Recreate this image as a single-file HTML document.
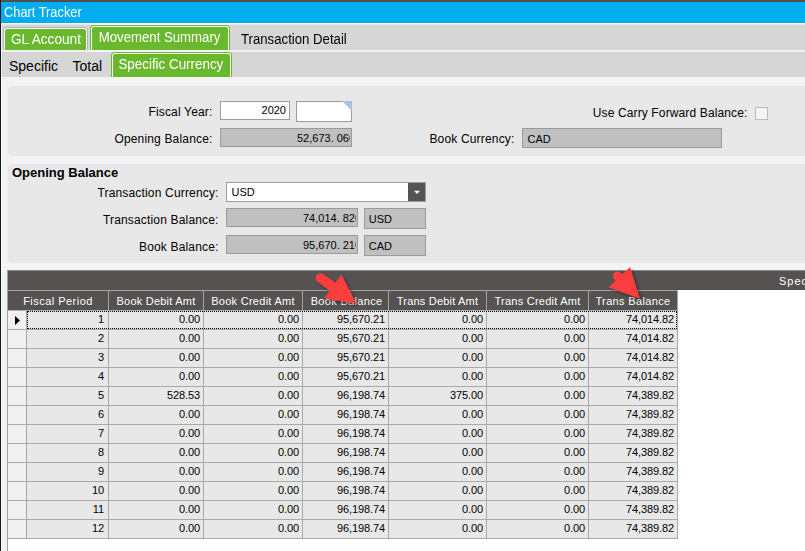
<!DOCTYPE html>
<html>
<head>
<meta charset="utf-8">
<title>Chart Tracker</title>
<style>
*{box-sizing:border-box;margin:0;padding:0}
html,body{width:805px;height:551px;overflow:hidden;background:#f3f3f5;font-family:"Liberation Sans",sans-serif;color:#000}
#root{position:absolute;left:0;top:0;width:805px;height:551px;overflow:hidden;background:#f3f3f5}
.abs{position:absolute}
.topline{left:0;top:0;width:805px;height:2px;background:#54504f}
.leftline{left:0;top:0;width:1px;height:551px;background:#101820;z-index:50}
.title{left:1px;top:2px;width:804px;height:21px;background:#00aeef;color:#fff;font-size:14px;line-height:20px;padding-left:2.5px;white-space:nowrap}
.title span{display:inline-block;transform-origin:0 50%;transform:scaleX(.917)}
.tabbar{left:1px;width:804px;background:#d6d6d6}
.wline{left:1px;width:804px;height:2px;background:linear-gradient(#fbf8f7 0,#fbf8f7 50%,#e9e9e9 50%,#e9e9e9 100%)}
.wline2{left:1px;width:804px;height:2px;background:linear-gradient(#f4f4f4 0,#f4f4f4 50%,#ededed 50%,#ededed 100%)}
.wspot{height:2px;background:#fbf8f9}
.tab{position:absolute;font-size:14px;white-space:nowrap;color:#000;line-height:16px}
.gtab{position:absolute;background:#69b82d;color:#fff;font-size:14px;white-space:nowrap;border-radius:3px 3px 0 0;border:1px solid #fff;border-bottom:none;text-align:center}
.gtab{clip-path:inset(-1px -1px 0 -1px)}
.gtab.inactive{box-shadow:0 0 0 1px #b4b4b4}
.gtab.active{box-shadow:0 0 0 1px #69b82d}
.panel{position:absolute;background:#e8e8e8;border-radius:4px 0 0 4px}
.lbl{position:absolute;font-size:12px;letter-spacing:0.17px;white-space:nowrap;text-align:right;line-height:16px}
.ro{position:absolute;background:#c0c0c0;border:1px solid #9b9b9b;font-size:11px;line-height:16px;white-space:nowrap;overflow:hidden;padding:0 5px}
.in{position:absolute;background:#fff;border:1px solid #9b9b9b;font-size:11px;line-height:16px;white-space:nowrap;overflow:hidden;padding:0 4px}
.num{position:absolute;top:1px;line-height:17px}
.gridwrap{position:absolute;left:8px;top:291px;width:670px;font-size:11px}
.ghead{display:flex;height:20px;background:#555251;color:#fff;border-bottom:1px solid #b0b0b0}
.hc{height:19px;border-right:1px solid #a6a4a3;text-align:center;line-height:21px;white-space:nowrap;letter-spacing:0.35px;flex:none}
.hc.sel{width:19px;border-right:none}
.hc.fp span{position:relative;left:-9.5px}
.grow{display:flex;height:19px}
.gc{height:19px;background:#e8e8e8;border-right:1px solid #a9a9a9;border-bottom:1px solid #a9a9a9;text-align:right;padding-right:3px;line-height:17px;white-space:nowrap;flex:none;overflow:hidden;letter-spacing:-0.1px}
.gc.sel{width:19px;background:#f0f0f0}
.focus{left:27px;top:311px;width:650px;height:18px;border:1px dotted #000}

.sx{display:inline-block;transform-origin:50% 50%}
.tab .sx{transform-origin:0 50%}

</style>
</head>
<body>
<div id="root">
  <div class="abs topline"></div>
  <div class="abs leftline"></div>
  <div class="abs title"><span>Chart Tracker</span></div>

  <!-- first tab bar -->
  <div class="abs wline" style="top:23px"></div>
  <div class="abs wspot" style="left:90px;top:23px;width:140px"></div>
  <div class="abs tabbar" style="top:25px;height:25px"></div>
  <div class="gtab inactive" style="left:4px;top:28px;width:83px;height:22px;line-height:21px"><span class="sx" style="transform:scaleX(.975)">GL Account</span></div>
  <div class="gtab active" style="left:91px;top:26px;width:138px;height:24px;line-height:21px"><span class="sx" style="transform:scaleX(.9415)">Movement Summary</span></div>
  <div class="tab" style="left:241px;top:31px"><span class="sx" style="transform:scaleX(.9417)">Transaction Detail</span></div>

  <!-- second tab bar -->
  <div class="abs wline2" style="top:50px"></div>
  <div class="abs wspot" style="left:90px;top:50px;width:140px"></div>
  <div class="abs tabbar" style="top:52px;height:25px"></div>
  <div class="tab" style="left:9px;top:58px">Specific</div>
  <div class="tab" style="left:72.5px;top:58px">Total</div>
  <div class="gtab active" style="left:112px;top:53px;width:119px;height:24px;line-height:21px;padding-right:0.8px"><span class="sx" style="transform:scaleX(.956)">Specific Currency</span></div>

  <div class="abs" style="left:1px;top:23px;width:1px;height:528px;background:rgba(255,255,255,.55);z-index:40"></div>
  <!-- panel 1 -->
  <div class="panel" style="left:8px;top:86px;width:797px;height:70px"></div>
  <div class="lbl" style="left:100px;width:112.5px;top:104px">Fiscal Year:</div>
  <div class="in" style="left:220px;top:101px;width:70px;height:19px;text-align:right;padding-right:3px;line-height:17px">2020</div>
  <div class="in" style="left:296px;top:101px;width:56px;height:21px;padding:0;overflow:visible">
    <svg class="abs" style="right:-1px;top:-1px" width="10" height="10" viewBox="0 0 10 10"><path d="M0 0 L10 0 L10 10 Z" fill="#abc1e2"/></svg>
  </div>
  <div class="lbl" style="left:100px;width:112.5px;top:131px">Opening Balance:</div>
  <div class="ro" style="left:220px;top:128px;width:132px;height:19px;padding:0 1px 0 0"><div style="position:relative;width:100%;height:100%;overflow:hidden"><span class="num" style="left:76px">52,673. 060</span></div></div>
  <div class="lbl" style="left:560px;width:187.5px;top:105px;letter-spacing:0.13px">Use Carry Forward Balance:</div>
  <div class="abs" style="left:755px;top:107px;width:13px;height:13px;border:1px solid #bcbcbc;background:#f4f4f4"></div>
  <div class="lbl" style="left:400px;width:114.5px;top:131px">Book Currency:</div>
  <div class="ro" style="left:522px;top:128px;width:200px;height:20px;line-height:20px;padding-left:4.5px">CAD</div>

  <!-- panel 2 -->
  <div class="panel" style="left:8px;top:164px;width:797px;height:99px"></div>
  <div class="abs" style="left:12px;top:164px;font-size:13px;font-weight:bold;line-height:18px;white-space:nowrap">Opening Balance</div>
  <div class="lbl" style="left:60px;width:158.6px;top:185px">Transaction Currency:</div>
  <div class="in" style="left:226px;top:182px;width:200px;height:20px;line-height:19px;padding-left:4.5px">USD
    <div class="abs" style="right:0;top:0;width:17px;height:18px;background:#555250"></div>
    <svg class="abs" style="right:4.5px;top:7px" width="8" height="5" viewBox="0 0 8 5"><path d="M1 0.8 L7 0.8 L4 4 Z" fill="#fff"/></svg>
  </div>
  <div class="lbl" style="left:60px;width:158.6px;top:212px">Transaction Balance:</div>
  <div class="ro" style="left:226px;top:208px;width:132px;height:19px;padding:0 1px 0 0"><div style="position:relative;width:100%;height:100%;overflow:hidden"><span class="num" style="left:76px">74,014. 820</span></div></div>
  <div class="ro" style="left:364px;top:208px;width:62px;height:21px;line-height:20px;padding-left:3.7px">USD</div>
  <div class="lbl" style="left:60px;width:158.6px;top:239px">Book Balance:</div>
  <div class="ro" style="left:226px;top:235px;width:132px;height:19px;padding:0 1px 0 0"><div style="position:relative;width:100%;height:100%;overflow:hidden"><span class="num" style="left:76px">95,670. 210</span></div></div>
  <div class="ro" style="left:364px;top:235px;width:62px;height:21px;line-height:20px;padding-left:3.7px">CAD</div>

  <!-- grid frame -->
  <div class="abs" style="left:7px;top:270px;width:798px;height:281px;background:#fff;border-left:1px solid #a0a0a0;border-top:1px solid #8c8a89"></div>
  <div class="abs" style="left:8px;top:271px;width:797px;height:19px;background:#555251"></div>
  <div class="abs" style="left:779px;top:274px;font-size:11px;letter-spacing:1px;color:#fff;white-space:nowrap;line-height:14px">Specific Currency</div>
  <div class="abs" style="left:8px;top:290px;width:670px;height:1px;background:#a6a4a3"></div>

<div class="gridwrap">
<div class="ghead">
<div class="hc sel"></div>
<div class="hc fp" style="width:82px;letter-spacing:0.47px;padding-left:0px"><span>Fiscal Period</span></div>
<div class="hc" style="width:95px;letter-spacing:0.23px;padding-left:0px"><span>Book Debit Amt</span></div>
<div class="hc" style="width:99px;letter-spacing:0.27px;padding-left:0px"><span>Book Credit Amt</span></div>
<div class="hc" style="width:86px;letter-spacing:0.33px;padding-left:2.2px"><span>Book Balance</span></div>
<div class="hc" style="width:98px;letter-spacing:0.2px;padding-left:0px"><span>Trans Debit Amt</span></div>
<div class="hc" style="width:102px;letter-spacing:0.24px;padding-left:0px"><span>Trans Credit Amt</span></div>
<div class="hc" style="width:89px;letter-spacing:0.35px;padding-left:0px"><span>Trans Balance</span></div>
</div>
<div class="grow">
<div class="gc sel"></div>
<div class="gc" style="width:82px;padding-right:4px">1</div>
<div class="gc" style="width:95px;padding-right:3px">0.00</div>
<div class="gc" style="width:99px;padding-right:3px">0.00</div>
<div class="gc" style="width:86px;padding-right:3px">95,670.21</div>
<div class="gc" style="width:98px;padding-right:3px">0.00</div>
<div class="gc" style="width:102px;padding-right:3px">0.00</div>
<div class="gc" style="width:89px;padding-right:3px">74,014.82</div>
</div>
<div class="grow">
<div class="gc sel"></div>
<div class="gc" style="width:82px;padding-right:4px">2</div>
<div class="gc" style="width:95px;padding-right:3px">0.00</div>
<div class="gc" style="width:99px;padding-right:3px">0.00</div>
<div class="gc" style="width:86px;padding-right:3px">95,670.21</div>
<div class="gc" style="width:98px;padding-right:3px">0.00</div>
<div class="gc" style="width:102px;padding-right:3px">0.00</div>
<div class="gc" style="width:89px;padding-right:3px">74,014.82</div>
</div>
<div class="grow">
<div class="gc sel"></div>
<div class="gc" style="width:82px;padding-right:4px">3</div>
<div class="gc" style="width:95px;padding-right:3px">0.00</div>
<div class="gc" style="width:99px;padding-right:3px">0.00</div>
<div class="gc" style="width:86px;padding-right:3px">95,670.21</div>
<div class="gc" style="width:98px;padding-right:3px">0.00</div>
<div class="gc" style="width:102px;padding-right:3px">0.00</div>
<div class="gc" style="width:89px;padding-right:3px">74,014.82</div>
</div>
<div class="grow">
<div class="gc sel"></div>
<div class="gc" style="width:82px;padding-right:4px">4</div>
<div class="gc" style="width:95px;padding-right:3px">0.00</div>
<div class="gc" style="width:99px;padding-right:3px">0.00</div>
<div class="gc" style="width:86px;padding-right:3px">95,670.21</div>
<div class="gc" style="width:98px;padding-right:3px">0.00</div>
<div class="gc" style="width:102px;padding-right:3px">0.00</div>
<div class="gc" style="width:89px;padding-right:3px">74,014.82</div>
</div>
<div class="grow">
<div class="gc sel"></div>
<div class="gc" style="width:82px;padding-right:4px">5</div>
<div class="gc" style="width:95px;padding-right:3px">528.53</div>
<div class="gc" style="width:99px;padding-right:3px">0.00</div>
<div class="gc" style="width:86px;padding-right:3px">96,198.74</div>
<div class="gc" style="width:98px;padding-right:3px">375.00</div>
<div class="gc" style="width:102px;padding-right:3px">0.00</div>
<div class="gc" style="width:89px;padding-right:3px">74,389.82</div>
</div>
<div class="grow">
<div class="gc sel"></div>
<div class="gc" style="width:82px;padding-right:4px">6</div>
<div class="gc" style="width:95px;padding-right:3px">0.00</div>
<div class="gc" style="width:99px;padding-right:3px">0.00</div>
<div class="gc" style="width:86px;padding-right:3px">96,198.74</div>
<div class="gc" style="width:98px;padding-right:3px">0.00</div>
<div class="gc" style="width:102px;padding-right:3px">0.00</div>
<div class="gc" style="width:89px;padding-right:3px">74,389.82</div>
</div>
<div class="grow">
<div class="gc sel"></div>
<div class="gc" style="width:82px;padding-right:4px">7</div>
<div class="gc" style="width:95px;padding-right:3px">0.00</div>
<div class="gc" style="width:99px;padding-right:3px">0.00</div>
<div class="gc" style="width:86px;padding-right:3px">96,198.74</div>
<div class="gc" style="width:98px;padding-right:3px">0.00</div>
<div class="gc" style="width:102px;padding-right:3px">0.00</div>
<div class="gc" style="width:89px;padding-right:3px">74,389.82</div>
</div>
<div class="grow">
<div class="gc sel"></div>
<div class="gc" style="width:82px;padding-right:4px">8</div>
<div class="gc" style="width:95px;padding-right:3px">0.00</div>
<div class="gc" style="width:99px;padding-right:3px">0.00</div>
<div class="gc" style="width:86px;padding-right:3px">96,198.74</div>
<div class="gc" style="width:98px;padding-right:3px">0.00</div>
<div class="gc" style="width:102px;padding-right:3px">0.00</div>
<div class="gc" style="width:89px;padding-right:3px">74,389.82</div>
</div>
<div class="grow">
<div class="gc sel"></div>
<div class="gc" style="width:82px;padding-right:4px">9</div>
<div class="gc" style="width:95px;padding-right:3px">0.00</div>
<div class="gc" style="width:99px;padding-right:3px">0.00</div>
<div class="gc" style="width:86px;padding-right:3px">96,198.74</div>
<div class="gc" style="width:98px;padding-right:3px">0.00</div>
<div class="gc" style="width:102px;padding-right:3px">0.00</div>
<div class="gc" style="width:89px;padding-right:3px">74,389.82</div>
</div>
<div class="grow">
<div class="gc sel"></div>
<div class="gc" style="width:82px;padding-right:4px">10</div>
<div class="gc" style="width:95px;padding-right:3px">0.00</div>
<div class="gc" style="width:99px;padding-right:3px">0.00</div>
<div class="gc" style="width:86px;padding-right:3px">96,198.74</div>
<div class="gc" style="width:98px;padding-right:3px">0.00</div>
<div class="gc" style="width:102px;padding-right:3px">0.00</div>
<div class="gc" style="width:89px;padding-right:3px">74,389.82</div>
</div>
<div class="grow">
<div class="gc sel"></div>
<div class="gc" style="width:82px;padding-right:4px">11</div>
<div class="gc" style="width:95px;padding-right:3px">0.00</div>
<div class="gc" style="width:99px;padding-right:3px">0.00</div>
<div class="gc" style="width:86px;padding-right:3px">96,198.74</div>
<div class="gc" style="width:98px;padding-right:3px">0.00</div>
<div class="gc" style="width:102px;padding-right:3px">0.00</div>
<div class="gc" style="width:89px;padding-right:3px">74,389.82</div>
</div>
<div class="grow">
<div class="gc sel"></div>
<div class="gc" style="width:82px;padding-right:4px">12</div>
<div class="gc" style="width:95px;padding-right:3px">0.00</div>
<div class="gc" style="width:99px;padding-right:3px">0.00</div>
<div class="gc" style="width:86px;padding-right:3px">96,198.74</div>
<div class="gc" style="width:98px;padding-right:3px">0.00</div>
<div class="gc" style="width:102px;padding-right:3px">0.00</div>
<div class="gc" style="width:89px;padding-right:3px">74,389.82</div>
</div>
</div>
<div class="abs focus"></div>
<svg class="abs" style="left:13px;top:314px" width="10" height="13" viewBox="0 0 10 13"><path d="M2 2 L2 11 L7 6.5 Z" fill="#000"/></svg>
<svg class="abs" style="left:0;top:0;pointer-events:none" width="805" height="551" viewBox="0 0 805 551">
  <defs>
    <filter id="sh" x="-30%" y="-30%" width="160%" height="160%">
      <feGaussianBlur in="SourceAlpha" stdDeviation="1.5"/>
      <feOffset dx="1.5" dy="2" result="o"/>
      <feComponentTransfer><feFuncA type="linear" slope="0.45"/></feComponentTransfer>
      <feMerge><feMergeNode/><feMergeNode in="SourceGraphic"/></feMerge>
    </filter>
  </defs>
  <g filter="url(#sh)" fill="#fa3e3e" stroke="none">
    <path d="M320.6 278.1 L333 287" stroke="#fa3e3e" stroke-width="9.6" stroke-linecap="round" fill="none"/>
    <path d="M341.4 274.4 L324.2 298.6 L356.5 303.6 Z"/>
  </g>
  <g filter="url(#sh)" fill="#fa3e3e" stroke="none">
    <path d="M617.3 275.9 L620 278.5" stroke="#fa3e3e" stroke-width="9" stroke-linecap="round" fill="none"/>
    <path d="M630 267 L608.6 287.4 L639.8 298.4 Z"/>
  </g>
</svg>

</div>
</body>
</html>
